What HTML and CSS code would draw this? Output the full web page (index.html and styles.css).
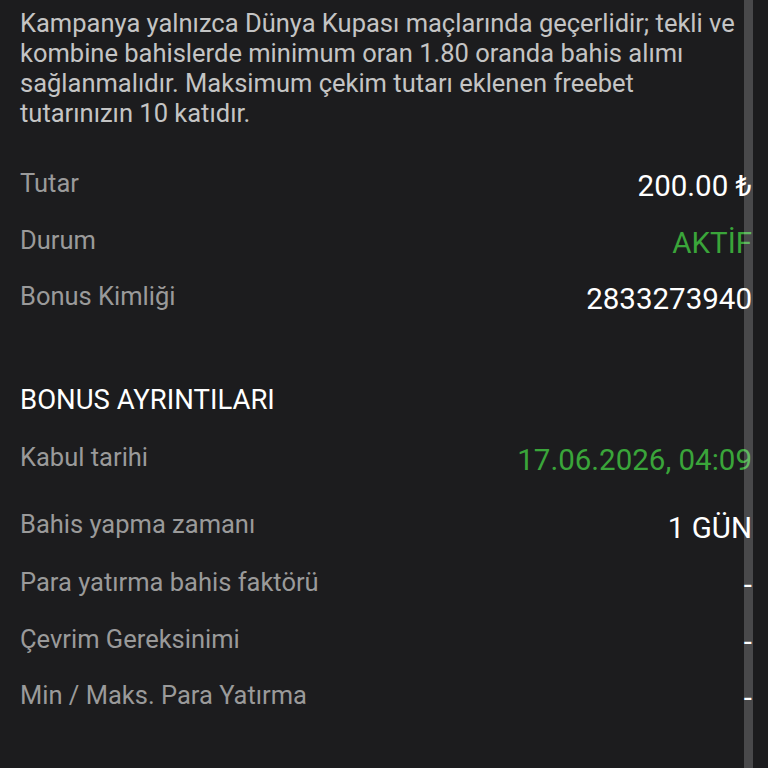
FILE: index.html
```html
<!DOCTYPE html>
<html lang="tr">
<head>
<meta charset="utf-8">
<title>Bonus</title>
<link rel="stylesheet" href="styles.css">
</head>
<body>
<main class="page">
  <p class="terms">Kampanya yalnızca Dünya Kupası maçlarında geçerlidir; tekli ve kombine bahislerde minimum oran 1.80 oranda bahis alımı sağlanmalıdır. Maksimum çekim tutarı eklenen freebet tutarınızın 10 katıdır.</p>

  <section class="info">
    <div class="row"><span class="label">Tutar</span><span class="value">200.00 ₺</span></div>
    <div class="row"><span class="label">Durum</span><span class="value green">AKTİF</span></div>
    <div class="row"><span class="label">Bonus Kimliği</span><span class="value">2833273940</span></div>
  </section>

  <h2 class="heading">BONUS AYRINTILARI</h2>

  <section class="info details">
    <div class="row row-tall"><span class="label">Kabul tarihi</span><span class="value green">17.06.2026, 04:09</span></div>
    <div class="row"><span class="label">Bahis yapma zamanı</span><span class="value value-low">1 GÜN</span></div>
    <div class="row"><span class="label">Para yatırma bahis faktörü</span><span class="value">-</span></div>
    <div class="row"><span class="label">Çevrim Gereksinimi</span><span class="value">-</span></div>
    <div class="row"><span class="label">Min / Maks. Para Yatırma</span><span class="value">-</span></div>
  </section>
</main>
<div class="scrollbar"></div>
</body>
</html>
```
FILE: styles.css
```css
html, body {
  margin: 0;
  padding: 0;
  background: #1c1c1e;
  height: 100%;
  overflow: hidden;
}

body {
  font-family: Roboto, "Noto Sans", "Liberation Sans", sans-serif;
}

.page {
  padding: 8px 16px 0 20px;
}

.terms {
  margin: 0;
  font-size: 25.5px;
  line-height: 30px;
  color: #c4c4c4;
}

.info {
  display: flex;
  flex-direction: column;
  gap: 22px;
  margin-top: 41px;
}

.row {
  display: flex;
  justify-content: space-between;
  align-items: flex-start;
}

.row-tall {
  margin-bottom: 11px;
}

.label {
  font-size: 25.5px;
  line-height: 1.172;
  color: #9a9a9a;
}

.value {
  font-size: 29.5px;
  line-height: 1.172;
  color: #ffffff;
  white-space: nowrap;
}

.value-low {
  padding-top: 1px;
}

.green {
  color: #3aa53a;
}

.heading {
  margin: 67px 0 0;
  font-size: 27.5px;
  font-weight: 400;
  line-height: 1.172;
  color: #ffffff;
}

.details {
  margin-top: 27px;
}

.scrollbar {
  position: fixed;
  top: 0;
  bottom: 0;
  right: 15px;
  width: 9px;
  background: rgba(255, 255, 255, 0.2);
}
```
